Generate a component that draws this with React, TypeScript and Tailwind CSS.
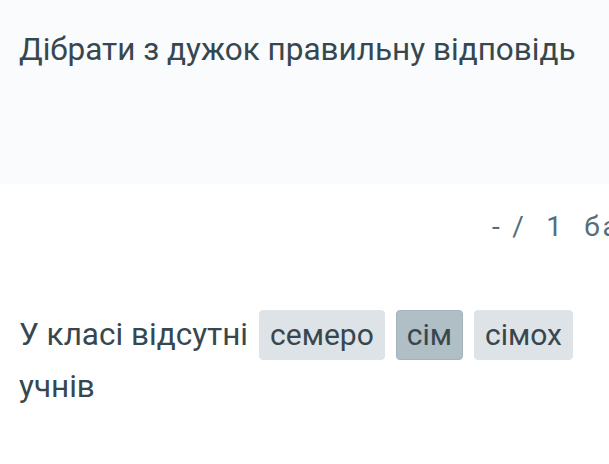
export default function App() {
  return (
    <div className="w-[609px] h-[464px] overflow-hidden bg-white text-[#37474f]" style={{ fontFamily: 'Roboto, "Noto Sans", sans-serif' }}>
      <div className="h-[184px] bg-[#f9fbfc] px-[19px] pt-[32px]">
        <h1 className="text-[31.5px] leading-[36px] font-normal whitespace-nowrap">Дібрати з дужок правильну відповідь</h1>
      </div>
      <div className="pl-[492px] pt-[25px] h-[110px] whitespace-nowrap overflow-hidden text-[28px] leading-[36px] text-[#546e7a] tracking-[0.1em]">
        -&nbsp;/&nbsp;&nbsp;1&nbsp;&nbsp;бал
      </div>
      <div className="px-[19px] pt-[16px] flex flex-wrap items-center gap-x-[11px] gap-y-[2px] text-[31.5px] leading-[50px]">
        <span>У класі відсутні</span>
        <span className="h-[50px] px-[10px] text-[30px] rounded-[4px] bg-[#dde3e7] border border-[#dde3e7] flex items-center">семеро</span>
        <span className="h-[50px] px-[10px] text-[30px] rounded-[4px] bg-[#b0bec5] border border-[#a4b2b9] flex items-center">сім</span>
        <span className="h-[50px] px-[10px] text-[30px] rounded-[4px] bg-[#dde3e7] border border-[#dde3e7] flex items-center">сімох</span>
        <span>учнів</span>
      </div>
    </div>
  );
}
